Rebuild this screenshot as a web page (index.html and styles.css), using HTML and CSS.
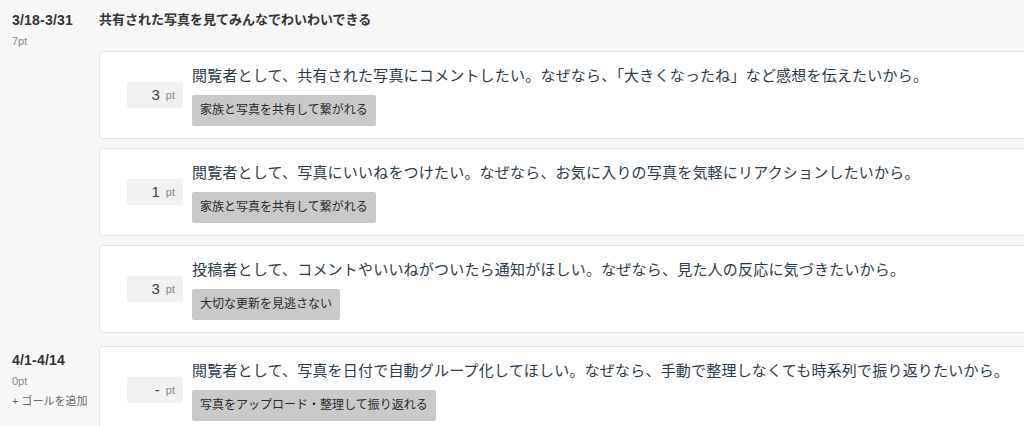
FILE: index.html
```html
<!DOCTYPE html>
<html lang="ja">
<head>
<meta charset="utf-8">
<title>Sprint backlog</title>
<link rel="stylesheet" href="styles.css">
</head>
<body>
<div class="page">
  <section class="sprint">
    <div class="sprint-meta">
      <div class="sprint-range">3/18-3/31</div>
      <div class="sprint-pt">7pt</div>
    </div>
    <div class="sprint-body">
      <div class="goal-title">共有された写真を見てみんなでわいわいできる</div>
      <div class="cards">
        <div class="card">
          <div class="pt-box"><span class="pt-num">3</span><span class="pt-unit">pt</span></div>
          <div class="card-content">
            <div class="story">閲覧者として、共有された写真にコメントしたい。なぜなら、「大きくなったね」など感想を伝えたいから。</div>
            <div class="tag">家族と写真を共有して繋がれる</div>
          </div>
        </div>
        <div class="card">
          <div class="pt-box"><span class="pt-num">1</span><span class="pt-unit">pt</span></div>
          <div class="card-content">
            <div class="story">閲覧者として、写真にいいねをつけたい。なぜなら、お気に入りの写真を気軽にリアクションしたいから。</div>
            <div class="tag">家族と写真を共有して繋がれる</div>
          </div>
        </div>
        <div class="card">
          <div class="pt-box"><span class="pt-num">3</span><span class="pt-unit">pt</span></div>
          <div class="card-content">
            <div class="story">投稿者として、コメントやいいねがついたら通知がほしい。なぜなら、見た人の反応に気づきたいから。</div>
            <div class="tag">大切な更新を見逃さない</div>
          </div>
        </div>
      </div>
    </div>
  </section>
  <section class="sprint">
    <div class="sprint-meta">
      <div class="sprint-range">4/1-4/14</div>
      <div class="sprint-pt">0pt</div>
      <div class="add-goal">+ ゴールを追加</div>
    </div>
    <div class="sprint-body">
      <div class="cards">
        <div class="card">
          <div class="pt-box"><span class="pt-num">-</span><span class="pt-unit">pt</span></div>
          <div class="card-content">
            <div class="story">閲覧者として、写真を日付で自動グループ化してほしい。なぜなら、手動で整理しなくても時系列で振り返りたいから。</div>
            <div class="tag">写真をアップロード・整理して振り返れる</div>
          </div>
        </div>
      </div>
    </div>
  </section>
</div>
</body>
</html>
```

FILE: styles.css
```css
html, body {
  margin: 0;
  padding: 0;
  overflow: hidden;
  background: #f7f7f7;
}
body {
  font-family: "Liberation Sans", "Noto Sans CJK JP", sans-serif;
  color: #333;
}
.page {
  padding: 11px 0 0 12px;
  display: flex;
  flex-direction: column;
  gap: 13px;
  width: 1060px;
}
.sprint {
  display: grid;
  grid-template-columns: 87px 960px;
}
.sprint-meta {
  display: flex;
  flex-direction: column;
}
.sprint-range {
  font-size: 14px;
  font-weight: bold;
  line-height: 18px;
  letter-spacing: 0.2px;
  color: #333;
}
.sprint-pt {
  font-size: 11px;
  line-height: 16px;
  margin-top: 4px;
  color: #888;
}
.add-goal {
  font-size: 11px;
  line-height: 16px;
  margin-top: 4px;
  color: #666;
}
.sprint:nth-child(2) .sprint-meta {
  padding-top: 5px;
}
.goal-title {
  font-size: 13px;
  font-weight: bold;
  line-height: 18px;
  color: #333;
  margin-bottom: 22px;
}
.cards {
  display: flex;
  flex-direction: column;
  gap: 9px;
}
.card {
  display: flex;
  align-items: center;
  background: #fff;
  border: 1px solid #e4e4e4;
  border-radius: 4px;
  height: 88px;
  box-sizing: border-box;
}
.pt-box {
  width: 56px;
  height: 26px;
  margin-left: 27px;
  margin-right: 9px;
  background: #f1f1f1;
  border-radius: 3px;
  display: flex;
  align-items: center;
  justify-content: flex-end;
  gap: 6px;
  padding-right: 8px;
  box-sizing: border-box;
}
.pt-num {
  font-size: 15px;
  color: #444;
  line-height: 18px;
}
.pt-unit {
  font-size: 11px;
  color: #888;
  line-height: 18px;
}
.card-content {
  display: flex;
  flex-direction: column;
  align-items: flex-start;
  gap: 8px;
}
.story {
  font-size: 15px;
  line-height: 22px;
  letter-spacing: 0.2px;
  color: #2b3a4a;
  white-space: nowrap;
}
.tag {
  font-size: 12px;
  line-height: 15px;
  padding: 8px 8px;
  background: #c9c9c9;
  color: #2a2a2a;
  border-radius: 2px;
}
```
